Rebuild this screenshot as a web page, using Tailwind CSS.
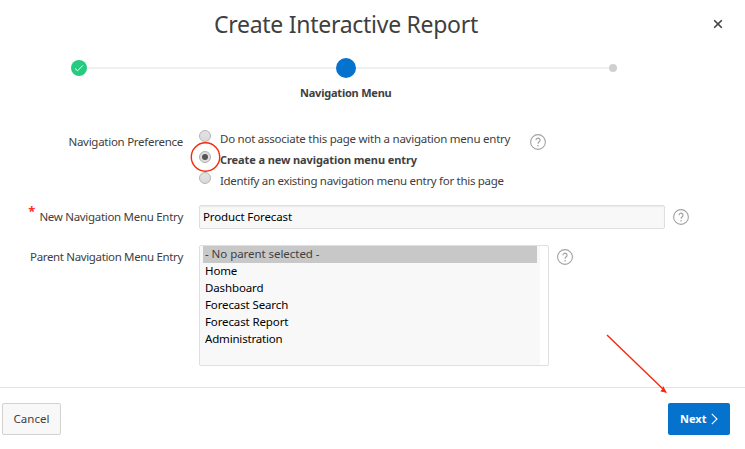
<!DOCTYPE html>
<html lang="en">
<head>
<meta charset="utf-8">
<title>Create Interactive Report</title>
<script src="https://cdn.jsdelivr.net/npm/@tailwindcss/browser@4"></script>
</head>
<body class="bg-white">
<svg class="hidden">
  <symbol id="help" viewBox="0 0 16 16"><circle cx="8" cy="8" r="7.4" fill="none" stroke="#a3a3a3" stroke-width="1.1"/><path d="M6 6.2a2 2 0 1 1 3.2 1.6C8.4 8.4 8.1 8.8 8.1 9.8" fill="none" stroke="#a3a3a3" stroke-width="1.2"/><path d="M7.5 11h1.2v1.5H7.5z" fill="#a3a3a3"/></symbol>
</svg>
<div class="relative flex h-[449px] w-[745px] flex-col overflow-hidden bg-white font-['Noto_Sans','Open_Sans',sans-serif] text-[11.5px] leading-[15px] text-[#404040]">
  <header class="flex h-12 items-center pr-[22px]">
    <h1 class="flex-1 whitespace-nowrap text-center text-[23px] leading-8"><span class="tracking-[-0.28px]">Create Interactive Report</span></h1>
    <button class="ml-[21px] size-[10px]" aria-label="Close"><svg class="block size-[10px]" viewBox="0 0 10 10"><path d="M1.2 1.2l7.6 7.6M8.8 1.2L1.2 8.8" stroke="#404040" stroke-width="1.6"/></svg></button>
  </header>
  <nav class="ml-[71px] flex h-10 w-[546px] items-center">
    <svg class="size-4 shrink-0" viewBox="0 0 16 16"><circle cx="8" cy="8" r="8" fill="#25cb80"/><path d="M4 8.5l2.6 2.3L11.8 5.4" fill="none" stroke="#fff" stroke-width="1"/></svg>
    <div class="h-[2px] flex-1 bg-[#efefef]"></div>
    <div class="size-5 rounded-full bg-[#0572ce]"></div>
    <div class="h-[2px] w-[253px] bg-[#efefef]"></div>
    <div class="size-2 rounded-full bg-[#d0d0d0]"></div>
  </nav>
  <div class="flex h-[38px] items-start whitespace-nowrap pl-[300px] text-[11px] font-bold leading-[9px]"><span class="tracking-[-0.22px]">Navigation Menu</span></div>
  <main class="flex h-[261px] flex-col whitespace-nowrap">
    <section class="flex h-[79px]">
      <div class="w-[183px] pt-2 text-right"><span class="tracking-[-0.27px]">Navigation Preference</span></div>
      <div class="ml-4 h-[63px] w-[331px] pt-[5px]">
        <label class="flex h-[21px] items-start gap-[9px]"><i class="-mt-[1px] size-3 shrink-0 rounded-full border border-[#b5b5b5] bg-linear-to-b from-[#e3e3e3] to-[#dadada]"></i><span class="tracking-[-0.25px]">Do not associate this page with a navigation menu entry</span></label>
        <label class="flex h-[21px] items-start gap-[9px] text-[11px] font-bold leading-[15px]"><i class="-mt-[1px] flex size-3 shrink-0 items-center justify-center rounded-full border border-[#b0b0b0] bg-[#dedede]"><b class="size-[6px] rounded-full bg-[#555]"></b></i><span class="tracking-[-0.1px]">Create a new navigation menu entry</span></label>
        <label class="flex h-[21px] items-start gap-[9px]"><i class="-mt-[1px] size-3 shrink-0 rounded-full border border-[#b5b5b5] bg-linear-to-b from-[#e3e3e3] to-[#dadada]"></i><span class="tracking-[-0.3px]">Identify an existing navigation menu entry for this page</span></label>
      </div>
      <svg class="mt-2 size-4"><use href="#help"/></svg>
    </section>
    <section class="flex h-[40px]">
      <div class="flex w-[183px] justify-end pt-[4px]"><em class="-mt-1.5 mr-1 text-[13px] font-bold not-italic leading-[16px] text-[#ff2d2d]">*</em><span class="tracking-[-0.3px]">New Navigation Menu Entry</span></div>
      <div class="ml-4 h-6 w-[466px] rounded-[2px] border border-[#dfdfdf] bg-[#f8f8f8] pl-[3px] pt-[3px] text-black shadow-[inset_0_1px_1px_#ececec]"><span class="tracking-[-0.12px]">Product Forecast</span></div>
      <svg class="ml-2 mt-1 size-4"><use href="#help"/></svg>
    </section>
    <section class="flex">
      <div class="w-[183px] pt-[4px] text-right"><span class="tracking-[-0.35px]">Parent Navigation Menu Entry</span></div>
      <div class="ml-4 h-[121px] w-[350px] rounded-[2px] border border-[#dfdfdf] pr-2">
        <ul class="h-full bg-[#f8f8f8] pl-[3px] pr-[3px] tracking-[-0.12px] text-black [&>li]:h-[17px] [&>li]:pl-[2px]">
          <li class="bg-[#c8c8c8] tracking-[-0.05px] text-[#404040]"><span>- No parent selected -</span></li><li><span>Home</span></li><li><span>Dashboard</span></li><li><span>Forecast Search</span></li><li><span>Forecast Report</span></li><li><span class="tracking-[-0.18px]">Administration</span></li>
        </ul>
      </div>
      <svg class="ml-2 mt-1 size-4"><use href="#help"/></svg>
    </section>
  </main>
  <footer class="flex flex-1 items-start justify-between border-t border-[#e3e3e3] pl-[2px] pr-[15px] pt-[15px]">
    <button class="h-8 w-[59px] rounded-[2px] border border-[#d2d2d2] bg-[#f8f8f8] pb-0.5"><span>Cancel</span></button>
    <button class="flex h-8 w-[62px] items-center rounded-[2px] bg-[#0572ce] pl-3 text-[11px] font-bold text-white"><span class="w-[26px] pb-0.5">Next</span><svg class="ml-[5px] h-3 w-[7px]" viewBox="0 0 7 12"><path d="M.8.8L6 6 .8 11.2" fill="none" stroke="#fff" stroke-width="1.1"/></svg></button>
  </footer>
  <svg class="pointer-events-none absolute inset-0" width="745" height="449"><circle cx="205.5" cy="157" r="14.2" fill="none" stroke="#f6290c" stroke-width="1.4"/><path d="M607 335L663 389" stroke="#f6290c" stroke-width="1.4"/><path d="M667 393l-6.8-1.8 2.2-2.2.6-3.2z" fill="#f6290c"/></svg>
</div>
</body>
</html>
